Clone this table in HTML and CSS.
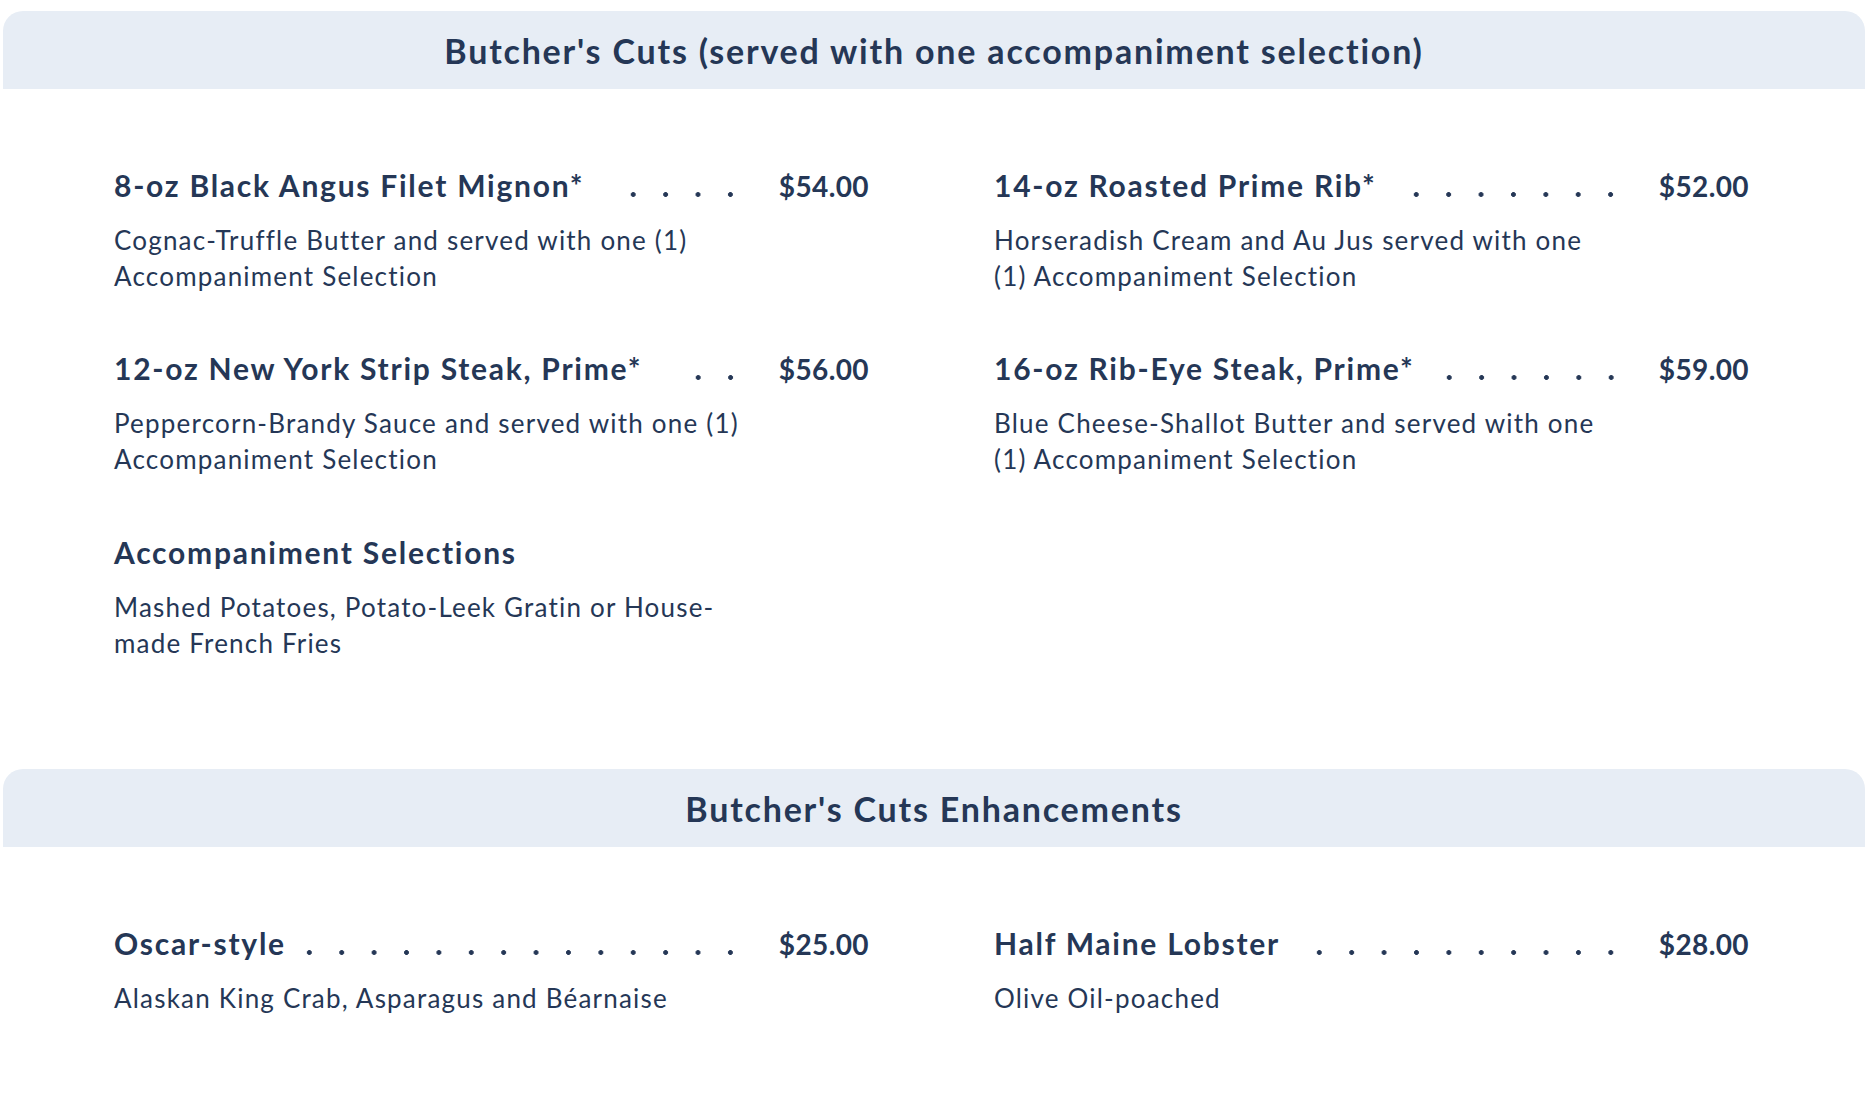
FILE: index.html
```html
<!DOCTYPE html>
<html lang="en">
<head>
<meta charset="utf-8">
<title>Butcher's Cuts</title>
<link rel="stylesheet" href="styles.css">
</head>
<body>
<main class="menu">
  <section class="section">
    <h2 class="band">Butcher's Cuts (served with one accompaniment selection)</h2>
    <div class="items">
      <article class="item">
        <div class="head"><h3 class="name">8-oz Black Angus Filet Mignon*</h3><span class="leader" style="--dots: 4"></span><span class="price">$54.00</span></div>
        <p class="desc">Cognac-Truffle Butter and served with one (1) Accompaniment Selection</p>
      </article>
      <article class="item">
        <div class="head"><h3 class="name">14-oz Roasted Prime Rib*</h3><span class="leader" style="--dots: 7"></span><span class="price">$52.00</span></div>
        <p class="desc">Horseradish Cream and Au Jus served with one (1) Accompaniment Selection</p>
      </article>
      <article class="item">
        <div class="head"><h3 class="name">12-oz New York Strip Steak, Prime*</h3><span class="leader" style="--dots: 2"></span><span class="price">$56.00</span></div>
        <p class="desc">Peppercorn-Brandy Sauce and served with one (1) Accompaniment Selection</p>
      </article>
      <article class="item">
        <div class="head"><h3 class="name">16-oz Rib-Eye Steak, Prime*</h3><span class="leader" style="--dots: 6"></span><span class="price">$59.00</span></div>
        <p class="desc">Blue Cheese-Shallot Butter and served with one (1) Accompaniment Selection</p>
      </article>
      <article class="item">
        <div class="head"><h3 class="name">Accompaniment Selections</h3></div>
        <p class="desc">Mashed Potatoes, Potato-Leek Gratin or House-made French Fries</p>
      </article>
    </div>
  </section>
  <section class="section">
    <h2 class="band">Butcher's Cuts Enhancements</h2>
    <div class="items">
      <article class="item">
        <div class="head"><h3 class="name">Oscar-style</h3><span class="leader" style="--dots: 14"></span><span class="price">$25.00</span></div>
        <p class="desc">Alaskan King Crab, Asparagus and Béarnaise</p>
      </article>
      <article class="item">
        <div class="head"><h3 class="name">Half Maine Lobster</h3><span class="leader" style="--dots: 10"></span><span class="price">$28.00</span></div>
        <p class="desc">Olive Oil-poached</p>
      </article>
    </div>
  </section>
</main>
</body>
</html>
```

FILE: styles.css
```css
* {
  box-sizing: border-box;
}

html, body {
  margin: 0;
  padding: 0;
  background: #ffffff;
}

body {
  font-family: Lato, "Noto Sans", "Liberation Sans", sans-serif;
  color: #253756;
}

.menu {
  padding: 11px 3px 0 3px;
}

.section + .section {
  margin-top: 108px;
}

.band {
  margin: 0;
  height: 78px;
  display: flex;
  align-items: center;
  justify-content: center;
  background: #e7edf5;
  border-radius: 20px 20px 0 0;
  font-size: 34px;
  letter-spacing: 1.8px;
  font-weight: 700;
  color: #253756;
}

.items {
  display: grid;
  grid-template-columns: 755px 755px;
  column-gap: 125px;
  row-gap: 56px;
  padding: 78px 0 0 111px;
}

.item {
  margin: 0;
}

.head {
  display: flex;
  align-items: baseline;
  height: 36px;
  line-height: 36px;
}

.name {
  margin: 0;
  font-size: 30px;
  letter-spacing: 1.75px;
  font-weight: 700;
  white-space: nowrap;
  flex: 0 0 auto;
}

.leader {
  margin-left: auto;
  width: calc(var(--dots) * 32.4px);
  height: 5px;
  flex: 0 0 auto;
  background-image: radial-gradient(circle, #253756 2.1px, rgba(37, 55, 86, 0) 2.7px);
  background-size: 32.4px 5px;
  background-repeat: repeat-x;
  background-position: right center;
}

.price {
  width: 122px;
  flex: 0 0 auto;
  text-align: right;
  font-size: 28px;
  letter-spacing: 0.4px;
  font-weight: 700;
}

.desc {
  margin: 20px 0 0 0;
  max-width: 626px;
  font-size: 26px;
  letter-spacing: 1.2px;
  line-height: 35.7px;
  font-weight: 400;
}
```
